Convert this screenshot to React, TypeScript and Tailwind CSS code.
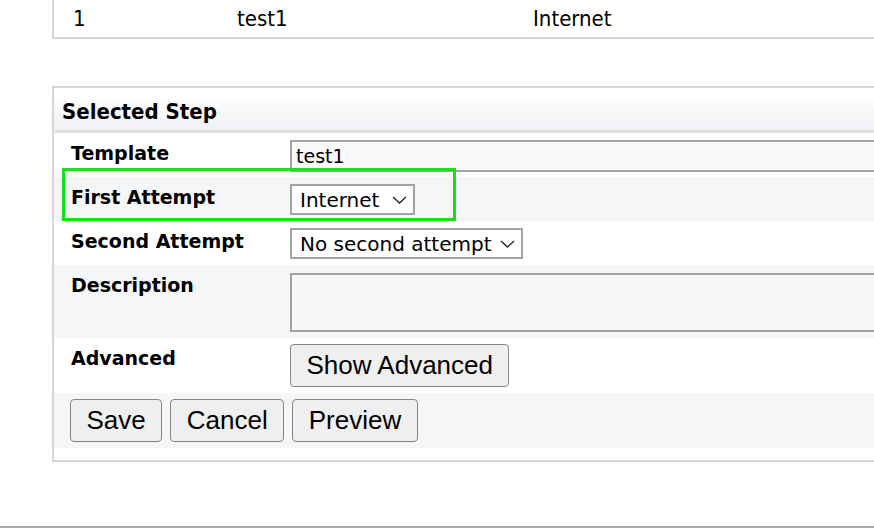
import React from 'react';

const condensed = { fontFamily: '"DejaVu Sans Condensed", "DejaVu Sans", sans-serif' };
const verdana = { fontFamily: '"DejaVu Sans", Verdana, sans-serif' };
const arial = { fontFamily: '"Liberation Sans", Arial, sans-serif' };

const Chevron = () => (
    <svg width="15" height="8" viewBox="0 0 15 8" className="shrink-0">
        <polyline points="1,1 7.5,7 14,1" fill="none" stroke="#222" strokeWidth="1.3" />
    </svg>
);

const Select = ({ value, width }: { value: string; width: string }) => (
    <div
        className={`flex h-[31px] items-center justify-between border-2 border-[#a3a3a3] bg-white pl-[8px] pr-[6px] text-[20px] text-black ${width}`}
        style={verdana}
    >
        <span>{value}</span>
        <Chevron />
    </div>
);

const Button = ({ label }: { label: string }) => (
    <button
        className="h-[43px] rounded-[4px] border-[1.5px] border-[#858585] bg-[#efefef] px-[15.5px] text-[26px] text-black"
        style={arial}
    >
        {label}
    </button>
);

const Row = ({
    label,
    gray,
    height,
    children,
}: {
    label?: string;
    gray?: boolean;
    height: string;
    children: React.ReactNode;
}) => (
    <div className={`flex ${height} ${gray ? 'bg-[#f5f6f8]' : 'bg-white'}`}>
        {label !== undefined && (
            <div className="w-[236px] shrink-0 pl-[17px] pt-[6px] text-[19px] font-bold text-black" style={verdana}>
                {label}
            </div>
        )}
        <div className="flex-1 pt-[7px]">{children}</div>
    </div>
);

const App = () => {
    return (
        <div className="relative h-[528px] w-full overflow-hidden bg-white">
            {/* list of steps, scrolled so only the last row shows */}
            <div className="ml-[52px] w-[900px] border-b-2 border-l-2 border-[#d6d6d6]">
                <div className="flex h-[37px] items-center pl-[19px] text-[22px] text-black" style={condensed}>
                    <span className="w-[164px]">1</span>
                    <span className="w-[296px]">test1</span>
                    <span>Internet</span>
                </div>
            </div>

            {/* selected step form */}
            <div className="relative ml-[52px] mt-[47px] w-[900px] border-y-2 border-l-2 border-[#d6d6d6] pb-[12px] pt-[12px]">
                <div
                    className="flex h-[33px] items-start border-b-[3px] border-[#dfe0e4] bg-gradient-to-b from-[#fcfcfd] to-[#f0f1f4] pl-[8px] text-[22px] font-bold leading-[22px] text-black"
                    style={condensed}
                >
                    <span className="mt-[1px]">Selected Step</span>
                </div>

                <Row label="Template" height="h-[44px]">
                    <div
                        className="flex h-[32px] items-center border-2 border-[#a3a3a3] bg-[#fafafa] pl-[4px] text-[19px] text-black"
                        style={verdana}
                    >
                        test1
                    </div>
                </Row>
                <Row label="First Attempt" gray height="h-[44px]">
                    <Select value="Internet" width="w-[125px]" />
                </Row>
                <Row label="Second Attempt" height="h-[44px]">
                    <Select value="No second attempt" width="w-[233px]" />
                </Row>
                <Row label="Description" gray height="h-[73px]">
                    <div className="mt-[1px] h-[59px] border-2 border-[#a3a3a3] bg-[#f7f7f7]" />
                </Row>
                <Row label="Advanced" height="h-[55px]">
                    <div className="-mt-[1px]">
                        <Button label="Show Advanced" />
                    </div>
                </Row>
                <div className="flex h-[55px] gap-[8px] bg-[#f5f6f8] pl-[16px] pt-[6px]">
                    <Button label="Save" />
                    <Button label="Cancel" />
                    <Button label="Preview" />
                </div>

                {/* highlight annotation */}
                <div className="absolute left-[8px] top-[80px] h-[53px] w-[394px] border-[3px] border-[#12e312]" />
            </div>

            <div className="absolute bottom-0 left-0 h-[2px] w-full bg-[#a9a9a9]" />
        </div>
    );
};

export default App;
